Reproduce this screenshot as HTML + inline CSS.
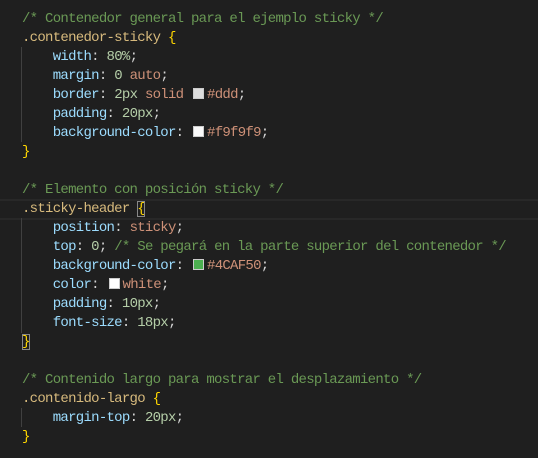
<!DOCTYPE html>
<html><head><meta charset="utf-8"><style>
html,body{margin:0;padding:0;background:#1f1f1f;width:538px;height:458px;overflow:hidden}
.code{position:absolute;left:22px;top:10px;font-family:"Liberation Mono",monospace;font-size:14px;letter-spacing:-0.72px;line-height:19px;color:#d4d4d4}
.l{height:19px;white-space:pre}
.c{color:#6a9955}.s{color:#d7ba7d}.p{color:#9cdcfe}.n{color:#b5cea8}.v{color:#ce9178}.b{color:#ffd700}
.sw{display:inline-block;width:9px;height:9px;border:1px solid #ccc;margin:0 3px 0 2px;vertical-align:-1px}
.guide{position:absolute;left:21px;width:1px;background:#404040}
.cur{position:absolute;left:0;right:0;top:199px;height:17px;border-top:2px solid #282828;border-bottom:2px solid #282828}
.bb{outline:1px solid #888;outline-offset:-1px}
</style></head><body>
<div class="cur"></div>
<div class="guide" style="top:47px;height:95px"></div>
<div class="guide" style="top:218px;height:115px"></div>
<div class="guide" style="top:408px;height:19px"></div>
<div class="code"><div class="l"><span class="c">/* Contenedor general para el ejemplo sticky */</span></div><div class="l"><span class="s">.contenedor-sticky</span> <span class="b">{</span></div><div class="l">    <span class="p">width</span>: <span class="n">80%</span>;</div><div class="l">    <span class="p">margin</span>: <span class="n">0</span> <span class="v">auto</span>;</div><div class="l">    <span class="p">border</span>: <span class="n">2px</span> <span class="v">solid</span> <span class="sw" style="background:#ddd"></span><span class="v">#ddd</span>;</div><div class="l">    <span class="p">padding</span>: <span class="n">20px</span>;</div><div class="l">    <span class="p">background-color</span>: <span class="sw" style="background:#f9f9f9"></span><span class="v">#f9f9f9</span>;</div><div class="l"><span class="b">}</span></div><div class="l"></div><div class="l"><span class="c">/* Elemento con posición sticky */</span></div><div class="l"><span class="s">.sticky-header</span> <span class="b bb">{</span></div><div class="l">    <span class="p">position</span>: <span class="v">sticky</span>;</div><div class="l">    <span class="p">top</span>: <span class="n">0</span>; <span class="c">/* Se pegará en la parte superior del contenedor */</span></div><div class="l">    <span class="p">background-color</span>: <span class="sw" style="background:#4CAF50"></span><span class="v">#4CAF50</span>;</div><div class="l">    <span class="p">color</span>: <span class="sw" style="background:#fff"></span><span class="v">white</span>;</div><div class="l">    <span class="p">padding</span>: <span class="n">10px</span>;</div><div class="l">    <span class="p">font-size</span>: <span class="n">18px</span>;</div><div class="l"><span class="b bb">}</span></div><div class="l"></div><div class="l"><span class="c">/* Contenido largo para mostrar el desplazamiento */</span></div><div class="l"><span class="s">.contenido-largo</span> <span class="b">{</span></div><div class="l">    <span class="p">margin-top</span>: <span class="n">20px</span>;</div><div class="l"><span class="b">}</span></div></div>
</body></html>
